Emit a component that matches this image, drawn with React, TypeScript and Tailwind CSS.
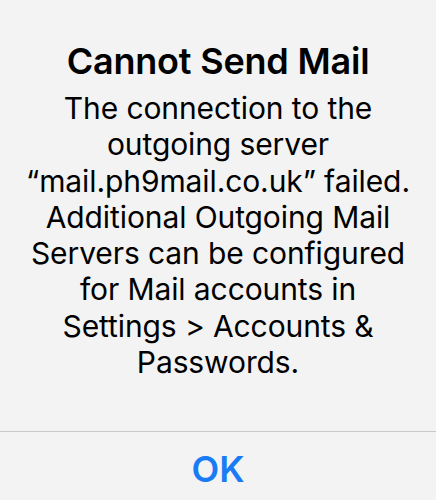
export default function App() {
  return (
    <div className="w-[436px] h-[500px] bg-[#f3f3f3] flex flex-col font-['Inter',sans-serif] text-black">
      {/* message */}
      <div className="h-[431px] flex flex-col items-center pt-[39px] text-center">
        <h1 className="text-[36px] leading-[44px] font-semibold tracking-[-0.2px]">Cannot Send Mail</h1>
        <p className="mt-[7px] text-[30px] leading-[36.3px] tracking-[-0.1px] w-[430px]">
          The connection to the
          <br />
          outgoing server
          <br />
          “mail.ph9mail.co.uk” failed.
          <br />
          Additional Outgoing Mail
          <br />
          Servers can be configured
          <br />
          for Mail accounts in
          <br />
          Settings &gt; Accounts &amp;
          <br />
          Passwords.
        </p>
      </div>
      <div className="h-px bg-[#c9c9c9]" />
      <button className="flex-1 flex items-center justify-center pt-[6px] text-[#1a7cf5] text-[36px] font-semibold">
        OK
      </button>
    </div>
  );
}
